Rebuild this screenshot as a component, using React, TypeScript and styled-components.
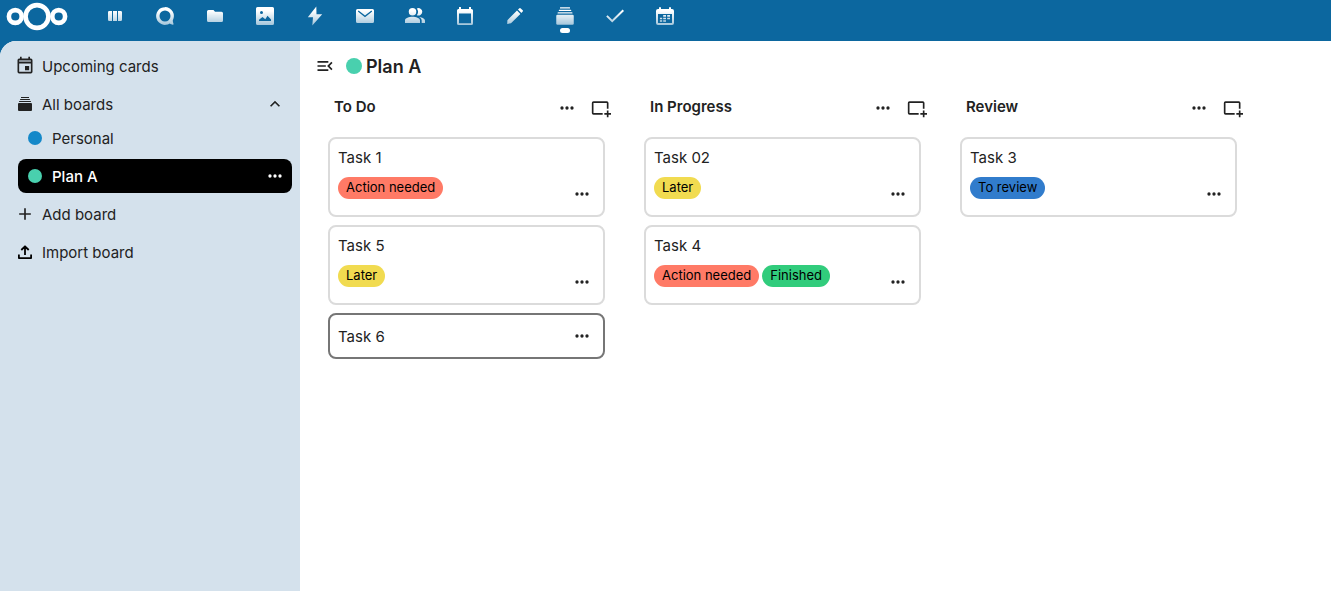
import React from "react";
import styled, { createGlobalStyle } from "styled-components";

const GlobalStyle = createGlobalStyle`
  *, *::before, *::after { box-sizing: border-box; }
  body {
    margin: 0;
    background: #0c679f;
    color: #222222;
    font-family: Inter, "Liberation Sans", sans-serif;
    font-size: 15px;
    line-height: 20px;
  }
  h1, h2, h3, ul { margin: 0; padding: 0; }
  ul { list-style: none; }
`;

const Page = styled.div`
  display: flex;
  flex-direction: column;
  min-height: 100vh;
`;

const TopBar = styled.header`
  display: flex;
  align-items: flex-start;
  height: 41px;
`;

const LogoLink = styled.a`
  display: block;
  width: 90px;
  padding: 0 6px;
  svg { display: block; }
`;

const AppMenu = styled.nav`
  display: flex;
`;

const AppLink = styled.a<{ $active?: boolean }>`
  display: flex;
  flex-direction: column;
  align-items: center;
  gap: 2px;
  width: 50px;
  height: 41px;
  padding-top: 6px;
  color: #ffffff;
  svg {
    display: block;
    mask-image: linear-gradient(#000 25%, rgba(0, 0, 0, 0.6));
  }
  &::after {
    content: "";
    width: 10px;
    height: 5px;
    border-radius: 3px;
    background: ${(p) => (p.$active ? "#ffffff" : "transparent")};
  }
`;

const Content = styled.div`
  display: flex;
  flex: 1;
  overflow: hidden;
  border-top-left-radius: 16px;
  background: #ffffff;
`;

const Sidebar = styled.nav`
  flex: 0 0 300px;
  padding: 8px;
  background: #d4e1ec;
`;

const NavList = styled.ul`
  display: flex;
  flex-direction: column;
  gap: 4px;
`;

const SubList = styled(NavList)`
  padding-left: 10px;
`;

const NavRow = styled.div<{ $active?: boolean }>`
  display: flex;
  align-items: center;
  height: 34px;
  border-radius: 8px;
  background: ${(p) => (p.$active ? "#000000" : "transparent")};
  color: ${(p) => (p.$active ? "#ffffff" : "inherit")};
  font-weight: ${(p) => (p.$active ? 500 : 400)};
`;

const NavEntry = styled.a`
  display: flex;
  flex: 1;
  align-items: center;
  height: 34px;
  color: inherit;
  text-decoration: none;
`;

const NavButton = styled.button`
  display: flex;
  flex: 1;
  align-items: center;
  height: 34px;
  padding: 0;
  border: 0;
  background: none;
  color: inherit;
  font: inherit;
  text-align: left;
`;

const NavLabel = styled.span`
  padding-top: 2px;
`;

const IconSlot = styled.span`
  display: flex;
  flex: 0 0 34px;
  align-items: center;
  justify-content: center;
`;

const IconButton = styled.button`
  display: flex;
  flex: 0 0 34px;
  align-items: center;
  justify-content: center;
  height: 34px;
  padding: 0;
  border: 0;
  background: none;
  color: inherit;
`;

const Dot = styled.span<{ $color: string; $size: number }>`
  flex: none;
  width: ${(p) => p.$size}px;
  height: ${(p) => p.$size}px;
  border-radius: 50%;
  background: ${(p) => p.$color};
`;

const Main = styled.main`
  flex: 1;
  min-width: 0;
  padding: 8px;
`;

const BoardHeader = styled.div`
  display: flex;
  align-items: center;
  gap: 4px;
  height: 34px;
`;

const BoardTitle = styled.h1`
  padding-top: 2px;
  font-size: 18px;
  font-weight: 600;
  line-height: 24px;
`;

const Columns = styled.div`
  display: flex;
  align-items: flex-start;
  gap: 26px;
  padding: 8px 20px;
  overflow-x: auto;
`;

const Column = styled.section`
  flex: 0 0 290px;
`;

const ColumnHeader = styled.header`
  display: flex;
  align-items: center;
  height: 34px;
  padding-left: 6px;
`;

const ColumnTitle = styled.h2`
  flex: 1;
  padding-bottom: 2px;
  font-size: 15px;
  font-weight: 600;
`;

const CardList = styled.ul`
  display: flex;
  flex-direction: column;
  gap: 8px;
  padding: 12px 13px 0 0;
`;

const Card = styled.li<{ $current?: boolean }>`
  display: flex;
  align-items: flex-end;
  padding: 4px 4px 4px 8px;
  border: 2px solid ${(p) => (p.$current ? "#767676" : "#dbdbdb")};
  border-radius: 8px;
  background: #ffffff;
`;

const CardBody = styled.div<{ $tagged: boolean }>`
  display: flex;
  flex: 1;
  flex-direction: column;
  gap: 4px;
  padding: ${(p) => (p.$tagged ? "0 0 12px" : "2px 0 0")};
`;

const CardTitle = styled.h3<{ $tagged: boolean }>`
  font-size: 15px;
  font-weight: 400;
  line-height: ${(p) => (p.$tagged ? 30 : 32)}px;
`;

const TagList = styled.ul`
  display: flex;
  gap: 3px;
`;

const Tag = styled.li<{ $color: string }>`
  height: 22px;
  padding: 0 8px;
  border-radius: 11px;
  background: ${(p) => p.$color};
  color: #000000;
  font-size: 13px;
  line-height: 21px;
`;

type IconProps = { size?: number; box?: number; children: React.ReactNode };
const Icon = ({ size = 20, box = 24, children }: IconProps) => (
  <svg width={size} height={size} viewBox={`0 0 ${box} ${box}`} fill="currentColor" aria-hidden="true">
    {children}
  </svg>
);

const MoreIcon = () => (
  <Icon>
    <path d="M16,12A2,2 0 0,1 18,10A2,2 0 0,1 20,12A2,2 0 0,1 18,14A2,2 0 0,1 16,12M10,12A2,2 0 0,1 12,10A2,2 0 0,1 14,12A2,2 0 0,1 12,14A2,2 0 0,1 10,12M4,12A2,2 0 0,1 6,10A2,2 0 0,1 8,12A2,2 0 0,1 6,14A2,2 0 0,1 4,12Z" />
  </Icon>
);

const AddCardIcon = () => (
  <Icon>
    <path d="M21,18H24V20H21V23H19V20H16V18H19V15H21V18M19,13V6H3V18H14V20H3A2,2 0 0,1 1,18V6A2,2 0 0,1 3,4H19A2,2 0 0,1 21,6V13H19Z" />
  </Icon>
);

const DeckIcon = ({ size }: { size: number }) => (
  <Icon size={size} box={16}>
    <rect x="1" y="7" width="14" height="8" rx="1" />
    <rect x="2" y="5" width="12" height="1" rx=".5" />
    <rect x="3" y="3" width="10" height="1" rx=".5" />
    <rect x="4" y="1" width="8" height="1" rx=".2" />
  </Icon>
);

const Logo = () => (
  <svg width="62" height="34" viewBox="0 0 62 34" fill="none" stroke="#fff" strokeWidth="4.6" aria-hidden="true">
    <circle cx="31" cy="16.5" r="11.4" />
    <circle cx="9.3" cy="16.5" r="6.4" />
    <circle cx="52.7" cy="16.5" r="6.4" />
  </svg>
);

const apps: { name: string; active?: boolean; icon: React.ReactNode }[] = [
  {
    name: "Dashboard",
    icon: (
      <Icon box={20}>
        <path d="M4.3 5H7V15H4.3A1.3 1.3 0 0 1 3 13.7V6.3A1.3 1.3 0 0 1 4.3 5ZM8 5H12V15H8ZM13 5H15.700A1.300 1.300 0 0 1 17 6.300V13.700A1.300 1.300 0 0 1 15.700 15H13Z" />
      </Icon>
    ),
  },
  {
    name: "Talk",
    icon: (
      <Icon box={16}>
        <path d="M8 .9a7.100 7.100 0 1 0 3.800 13.100c.9.700 2.300 1.200 2.900.8.500-.4-.4-1.700-.5-3.300A7.100 7.100 0 0 0 8 .9ZM8 3.600a4.400 4.400 0 1 1 0 8.800 4.400 4.400 0 0 1 0-8.800Z" />
      </Icon>
    ),
  },
  {
    name: "Files",
    icon: (
      <Icon box={20}>
        <path d="M3.500 4H8.500L10 5.800H16.500A1.500 1.500 0 0 1 18 7.300V14.500A1.500 1.500 0 0 1 16.500 16H3.500A1.500 1.500 0 0 1 2 14.500V5.500A1.500 1.500 0 0 1 3.500 4Z" />
      </Icon>
    ),
  },
  {
    name: "Photos",
    icon: (
      <Icon box={20}>
        <path fillRule="evenodd" d="M2.500 1H17.500A1.500 1.500 0 0 1 19 2.500V17.500A1.500 1.500 0 0 1 17.500 19H2.500A1.500 1.500 0 0 1 1 17.500V2.500A1.500 1.500 0 0 1 2.500 1ZM6.500 5A1.500 1.500 0 1 0 6.500 8A1.500 1.500 0 1 0 6.500 5ZM4 15H16V13.500L12.500 9.800L10.300 13.200L7.500 11L4 13.800Z" />
      </Icon>
    ),
  },
  {
    name: "Activity",
    icon: (
      <Icon box={20}>
        <path d="M11.300 .5 2.800 11.300H8L7.300 19.600 17.200 8.200H11.500Z" />
      </Icon>
    ),
  },
  {
    name: "Mail",
    icon: (
      <Icon box={20}>
        <path fillRule="evenodd" d="M2.500 3H17.500A1.500 1.500 0 0 1 19 4.500V15.500A1.500 1.500 0 0 1 17.500 17H2.500A1.500 1.500 0 0 1 1 15.500V4.500A1.500 1.500 0 0 1 2.500 3ZM3.600 4.600 2.800 5.500 10 11.200 17.200 5.500 16.400 4.600 10 9.600Z" />
      </Icon>
    ),
  },
  {
    name: "Contacts",
    icon: (
      <Icon>
        <circle cx="9" cy="7" r="4.500" />
        <path d="M14.200 3A4.500 4.500 0 1 1 14.200 11A6.600 6.600 0 0 0 14.200 3ZM0 20.500V17.500C0 14.500 5 13 9 13S18 14.500 18 17.500V20.500ZM17 13.200C20.500 13.700 24 15 24 17.800V20.500H20V17.500C20 15.600 18.700 14.200 17 13.200Z" />
      </Icon>
    ),
  },
  {
    name: "Calendar",
    icon: (
      <Icon box={20}>
        <path fillRule="evenodd" d="M4 1H6V3H14V1H16V3H16.500A1.500 1.500 0 0 1 18 4.500V17.500A1.500 1.500 0 0 1 16.500 19H3.500A1.500 1.500 0 0 1 2 17.500V4.500A1.500 1.500 0 0 1 3.500 3H4ZM4 7.500V17.200H16V7.500Z" />
      </Icon>
    ),
  },
  {
    name: "Notes",
    icon: (
      <Icon box={20}>
        <path d="M12 4.600 15.400 8 6 17.200 2.200 18 2.400 14.200ZM13 3.600 14.400 2.300Q15.100 1.700 15.800 2.400L17.700 4.300Q18.300 4.900 17.700 5.600L16.400 7Z" />
      </Icon>
    ),
  },
  { name: "Deck", active: true, icon: <DeckIcon size={20} /> },
  {
    name: "Tasks",
    icon: (
      <Icon box={20}>
        <path d="M17.600 3.500 19 4.900 7.200 16.600 1.200 10.600 2.600 9.200 7.200 13.800Z" />
      </Icon>
    ),
  },
  {
    name: "Appointments",
    icon: (
      <Icon box={20}>
        <path fillRule="evenodd" d="M4 1.500Q5 .5 6 1.500V3H14V1.500Q15 .5 16 1.500V3H17A2 2 0 0 1 19 5V17A2 2 0 0 1 17 19H3A2 2 0 0 1 1 17V5A2 2 0 0 1 3 3H4ZM3 8V16.500Q3 17 3.500 17H16.500Q17 17 17 16.500V8Z" />
        <path d="M8.200 9H11V10.800H8.200ZM12.200 9H15V10.800H12.200ZM4.900 11.700H7.200V13.300H4.900ZM8.200 11.700H11V13.300H8.200ZM12.200 11.700H15V13.300H12.200ZM4.900 14.200H7.200V15.800H4.900ZM8.200 14.200H11V15.800H8.200Z" />
      </Icon>
    ),
  },
];

const tags = {
  action: { label: "Action needed", color: "#ff7a66" },
  later: { label: "Later", color: "#f1db50" },
  finished: { label: "Finished", color: "#31cc7c" },
  review: { label: "To review", color: "#317ccc" },
};

type CardData = { title: string; tags: (keyof typeof tags)[]; current?: boolean };

const columns: { title: string; cards: CardData[] }[] = [
  {
    title: "To Do",
    cards: [
      { title: "Task 1", tags: ["action"] },
      { title: "Task 5", tags: ["later"] },
      { title: "Task 6", tags: [], current: true },
    ],
  },
  {
    title: "In Progress",
    cards: [
      { title: "Task 02", tags: ["later"] },
      { title: "Task 4", tags: ["action", "finished"] },
    ],
  },
  { title: "Review", cards: [{ title: "Task 3", tags: ["review"] }] },
];

const TaskCard = ({ card }: { card: CardData }) => {
  const tagged = card.tags.length > 0;
  return (
    <Card $current={card.current}>
      <CardBody $tagged={tagged}>
        <CardTitle $tagged={tagged}>{card.title}</CardTitle>
        {tagged && (
          <TagList>
            {card.tags.map((key) => (
              <Tag key={key} $color={tags[key].color}>{tags[key].label}</Tag>
            ))}
          </TagList>
        )}
      </CardBody>
      <IconButton type="button" aria-label={`Actions for ${card.title}`}>
        <MoreIcon />
      </IconButton>
    </Card>
  );
};

export default function App() {
  return (
    <>
      <GlobalStyle />
      <Page>
        <TopBar>
          <LogoLink href="#home" aria-label="Home">
            <Logo />
          </LogoLink>
          <AppMenu aria-label="Apps">
            {apps.map((app) => (
              <AppLink key={app.name} href={`#${app.name.toLowerCase()}`} aria-label={app.name} $active={app.active}>
                {app.icon}
              </AppLink>
            ))}
          </AppMenu>
        </TopBar>
        <Content>
          <Sidebar aria-label="Boards">
            <NavList>
              <li>
                <NavRow>
                  <NavEntry href="#upcoming">
                    <IconSlot>
                      <Icon>
                        <path fillOpacity=".3" d="M5 5H19V7H5Z" />
                        <path fillRule="evenodd" d="M6 1H8V3H16V1H18V3H19A2 2 0 0 1 21 5V19A2 2 0 0 1 19 21H5A2 2 0 0 1 3 19V5A2 2 0 0 1 5 3H6ZM5 5V7H19V5ZM5 9V19H19V9ZM12 12H17V17H12Z" />
                      </Icon>
                    </IconSlot>
                    <NavLabel>Upcoming cards</NavLabel>
                  </NavEntry>
                </NavRow>
              </li>
              <li>
                <NavRow>
                  <NavEntry href="#boards">
                    <IconSlot><DeckIcon size={16} /></IconSlot>
                    <NavLabel>All boards</NavLabel>
                  </NavEntry>
                  <IconButton type="button" aria-label="Collapse menu">
                    <Icon>
                      <path d="M7.410,15.410L12,10.830L16.590,15.410L18,14L12,8L6,14L7.410,15.410Z" />
                    </Icon>
                  </IconButton>
                </NavRow>
                <SubList>
                  <li>
                    <NavRow>
                      <NavEntry href="#personal">
                        <IconSlot><Dot $color="#1488c9" $size={14} /></IconSlot>
                        <NavLabel>Personal</NavLabel>
                      </NavEntry>
                    </NavRow>
                  </li>
                  <li>
                    <NavRow $active>
                      <NavEntry href="#plan-a" aria-current="page">
                        <IconSlot><Dot $color="#49d0ae" $size={14} /></IconSlot>
                        <NavLabel>Plan A</NavLabel>
                      </NavEntry>
                      <IconButton type="button" aria-label="Actions for Plan A">
                        <MoreIcon />
                      </IconButton>
                    </NavRow>
                  </li>
                </SubList>
              </li>
              <li>
                <NavRow>
                  <NavButton type="button">
                    <IconSlot>
                      <Icon><path d="M19,13H13V19H11V13H5V11H11V5H13V11H19V13Z" /></Icon>
                    </IconSlot>
                    <NavLabel>Add board</NavLabel>
                  </NavButton>
                </NavRow>
              </li>
              <li>
                <NavRow>
                  <NavButton type="button">
                    <IconSlot>
                      <Icon size={16} box={16}>
                        <path fill="none" stroke="#000" strokeWidth="1.800" strokeLinejoin="round" d="M8 11V2.500M4.300 6 8 2.300 11.700 6M1.900 10.500V14.100H14.100V10.500" />
                      </Icon>
                    </IconSlot>
                    <NavLabel>Import board</NavLabel>
                  </NavButton>
                </NavRow>
              </li>
            </NavList>
          </Sidebar>
          <Main>
            <BoardHeader>
              <IconButton type="button" aria-label="Close navigation">
                <Icon>
                  <path d="M21,15.610L19.590,17L14.580,12L19.590,7L21,8.390L17.440,12L21,15.610M3,6H16V8H3V6M3,13V11H13V13H3M3,18V16H16V18H3Z" />
                </Icon>
              </IconButton>
              <Dot $color="#49d0ae" $size={16} />
              <BoardTitle>Plan A</BoardTitle>
            </BoardHeader>
            <Columns>
              {columns.map((column) => (
                <Column key={column.title}>
                  <ColumnHeader>
                    <ColumnTitle>{column.title}</ColumnTitle>
                    <IconButton type="button" aria-label={`Actions for ${column.title}`}>
                      <MoreIcon />
                    </IconButton>
                    <IconButton type="button" aria-label={`Add card to ${column.title}`}>
                      <AddCardIcon />
                    </IconButton>
                  </ColumnHeader>
                  <CardList>
                    {column.cards.map((card) => (
                      <TaskCard key={card.title} card={card} />
                    ))}
                  </CardList>
                </Column>
              ))}
            </Columns>
          </Main>
        </Content>
      </Page>
    </>
  );
}
